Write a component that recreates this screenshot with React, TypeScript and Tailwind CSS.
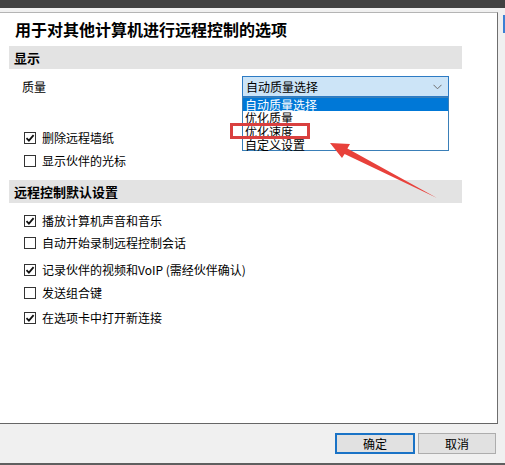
import React from "react";

const font = { fontFamily: '"Noto Sans CJK SC", "Microsoft YaHei", sans-serif' };

function Check({ checked, label }: { checked?: boolean; label: string }) {
  return (
    <div className="flex items-center h-[12px] pl-[24px]">
      <div className="w-[12px] h-[12px] border border-[#333333] bg-white flex items-center justify-center shrink-0">
        {checked && (
          <svg width="10" height="10" viewBox="0 0 10 10">
            <path d="M1.5 5.2 L3.9 7.6 L8.6 2.2" fill="none" stroke="#111" strokeWidth="1.8" />
          </svg>
        )}
      </div>
      <span className="ml-[6px] text-[12px] leading-[14px] text-black whitespace-nowrap">{label}</span>
    </div>
  );
}

export default function App() {
  return (
    <div className="w-[505px] h-[465px] bg-[#f0f0f0] relative overflow-hidden" style={font}>
      <div className="h-[8px] bg-[#414141]" />
      <div className="h-[4px] bg-[#f0f0f0]" />
      <div className="flex">
        <div className="w-[498px] h-[412px] bg-white border-t border-t-[#b4b4b4] border-r border-r-[#6e6e6e] border-b border-b-[#666666] relative">
          <div className="pt-[6px] pl-[15px] h-[27px] text-[16px] leading-[20px] font-bold text-black whitespace-nowrap">
            用于对其他计算机进行远程控制的选项
          </div>
          <div className="ml-[9px] mt-[6px] w-[453px] h-[23px] bg-[#e3e3e3] flex items-center pl-[5px] text-[13px] font-bold text-black">
            显示
          </div>
          <div className="mt-[7px] h-[21px] flex items-center">
            <span className="pl-[22px] text-[12px] text-black w-[242px]">质量</span>
            <div className="w-[207px] h-[21px] bg-[#cce4f7] border border-[#2d7bc4] flex items-center pl-[3px] pr-[6px] justify-between">
              <span className="text-[12px] leading-[14px] text-black">自动质量选择</span>
              <svg width="9" height="6" viewBox="0 0 9 6">
                <path d="M0.5 0.8 L4.5 4.8 L8.5 0.8" fill="none" stroke="#6d6d6d" strokeWidth="1" />
              </svg>
            </div>
          </div>
          <div className="mt-[35px]">
            <Check checked label="删除远程墙纸" />
          </div>
          <div className="mt-[11px]">
            <Check label="显示伙伴的光标" />
          </div>
          <div className="ml-[9px] mt-[13px] w-[453px] h-[23px] bg-[#e3e3e3] flex items-center pl-[5px] text-[13px] font-bold text-black">
            远程控制默认设置
          </div>
          <div className="mt-[12px]">
            <Check checked label="播放计算机声音和音乐" />
          </div>
          <div className="mt-[10px]">
            <Check label="自动开始录制远程控制会话" />
          </div>
          <div className="mt-[15px]">
            <Check checked label="记录伙伴的视频和VoIP (需经伙伴确认)" />
          </div>
          <div className="mt-[11px]">
            <Check label="发送组合键" />
          </div>
          <div className="mt-[13px]">
            <Check checked label="在选项卡中打开新连接" />
          </div>

          {/* open dropdown list */}
          <div className="absolute left-[242px] top-[84px] w-[207px] h-[54px] bg-white border border-[#3a7fb8] flex flex-col text-[12px] leading-[13px] text-black">
            <div className="h-[13px] bg-[#0078d7] text-white pl-[2px] flex items-center">自动质量选择</div>
            <div className="h-[13.5px] pl-[2px] flex items-center">优化质量</div>
            <div className="h-[13.5px] pl-[2px] flex items-center">优化速度</div>
            <div className="h-[12px] pl-[2px] flex items-center">自定义设置</div>
          </div>

          {/* annotation: red box */}
          <div className="absolute left-[230px] top-[110px] w-[80px] h-[16px] border-[3px] border-[#d9403f]" />

          {/* annotation: arrow */}
          <svg className="absolute left-0 top-0 pointer-events-none" width="498" height="412" viewBox="0 13 498 412">
            <polygon
              points="330,143 350,144 347.4,148.5 437,198 344.6,153.9 342,158"
              fill="#e8413b"
            />
          </svg>
        </div>
        <div className="flex-1 relative">
          <div className="absolute right-0 top-[3px] w-[2px] h-[18px] bg-[#3b7fd4]" />
        </div>
      </div>
      <div className="h-[39px] flex items-start justify-end pr-[9px] pt-[9px] gap-[3px]">
        <div className="w-[80px] h-[21px] bg-[#e1e1e1] border-2 border-[#1a73c6] flex items-center justify-center text-[12px] text-black">
          确定
        </div>
        <div className="w-[78px] h-[21px] bg-[#e1e1e1] border border-[#adadad] flex items-center justify-center text-[12px] text-black">
          取消
        </div>
      </div>
      <div className="h-[2px] bg-[#5f5f5f]" />
    </div>
  );
}
